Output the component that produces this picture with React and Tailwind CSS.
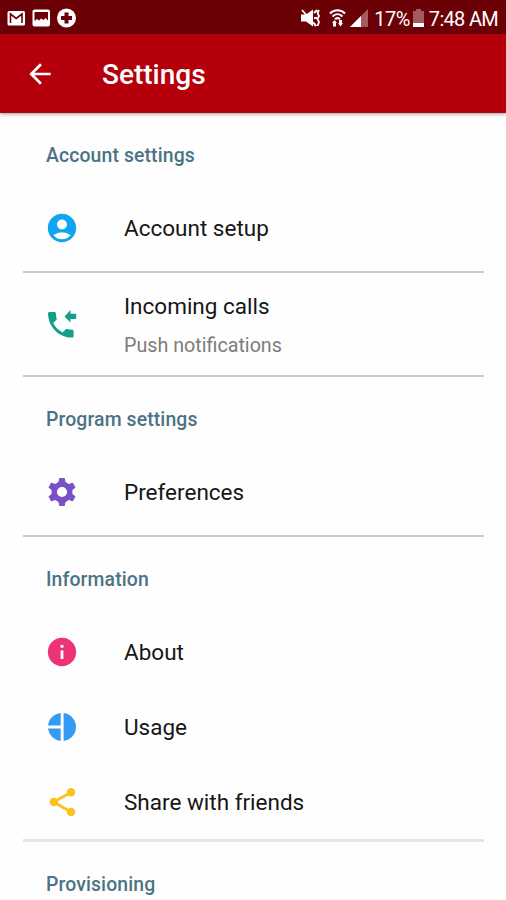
import { MdAccountCircle, MdArrowBack, MdInfo } from "react-icons/md";

function CallReceivedIcon({ className }) {
  return (
    <svg className={className} viewBox="0 0 34 34" fill="currentColor">
      <path
        transform="translate(-1.2 0.8) scale(1.42)"
        d="M20 15.5c-1.25 0-2.45-.2-3.57-.57-.35-.11-.74-.03-1.02.24l-2.2 2.2c-2.83-1.44-5.15-3.75-6.59-6.59l2.2-2.21c.28-.26.36-.65.25-1C8.7 6.45 8.5 5.25 8.5 4c0-.55-.45-1-1-1H4c-.55 0-1 .45-1 1 0 9.39 7.61 17 17 17 .55 0 1-.45 1-1v-3.5c0-.55-.45-1-1-1z"
      />
      <path d="M19.5 9.5l6-6.5v3.7h5.7v5.2h-5.7v3.7z" />
    </svg>
  );
}

function GearIcon({ className }) {
  return (
    <svg className={className} viewBox="0 0 34 34" fill="none" stroke="currentColor">
      <circle cx="17" cy="17" r="7.8" strokeWidth="5.4" />
      {[0, 60, 120, 180, 240, 300].map((angle) => (
        <path
          key={angle}
          transform={`rotate(${angle} 17 17)`}
          d="M14.600 3.500h4.800l.9 5h-6.600z"
          fill="currentColor"
          strokeWidth="1"
          strokeLinejoin="round"
        />
      ))}
    </svg>
  );
}

function UsageIcon({ className }) {
  return (
    <svg className={className} viewBox="0 0 34 34" fill="currentColor">
      <path d="M15.7 3v12.6H3A14.2 14.2 0 0 1 15.7 3z" />
      <path d="M15.7 31V18.6H3A14.2 14.2 0 0 0 15.7 31z" />
      <path d="M18.6 3a14.1 14.1 0 0 1 0 28z" />
    </svg>
  );
}

function ShareIcon({ className }) {
  return (
    <svg className={className} viewBox="0 0 34 34" fill="currentColor">
      <path d="M26 7.5L8.5 17 26 27" fill="none" stroke="currentColor" strokeWidth="2.8" />
      <circle cx="26" cy="7.3" r="4.2" />
      <circle cx="8.8" cy="17" r="4.2" />
      <circle cx="26" cy="27" r="4.2" />
    </svg>
  );
}

function NotificationIcons() {
  return (
    <svg className="h-[34px] w-[78px]" viewBox="0 0 78 34" fill="none">
      <rect x="7.5" y="11" width="17.5" height="14.5" rx="1.5" fill="#fff" />
      <path d="M10.500 23v-9l5.700 4.500L22 14v9" stroke="#6b0007" strokeWidth="1.6" />
      <rect x="32.5" y="9.5" width="17.5" height="17" rx="2" fill="#fff" />
      <path d="M34.5 12h13.500v8.500l-2.500-2.500-2 2-2.500-1.500-2 2-2-1.500-2.500 2z" fill="#6b0007" />
      <circle cx="66.5" cy="18" r="9.5" fill="#fff" />
      <path d="M66.5 12.5v11M61 18h11" stroke="#6b0007" strokeWidth="4" />
    </svg>
  );
}

function SignalIcons() {
  return (
    <svg className="h-[34px] w-[70px]" viewBox="300 0 70 34" fill="none">
      <path d="M301 14.500h5l7-5v17l-7-5h-5z" fill="#fff" />
      <path d="M302 10l14 16" stroke="#fff" strokeWidth="1.8" />
      <path
        d="M314 13l3-3M314 18h3M314 23l2 3M319 10l-1.500 3 1.500 3-1.500 3 1.500 3-1.500 4"
        stroke="#fff"
        strokeWidth="1.8"
      />
      <path
        d="M330 13.5c4-4.5 11-4.5 15 0M332.5 16.5c3-3 7-3 10 0M335 19.2c1.5-1.3 3.5-1.3 5 0"
        stroke="#fff"
        strokeWidth="2"
      />
      <path d="M332 23l2.5-3 2.5 3h-1v3.500h-3v-3.500z" fill="#fff" />
      <path d="M338 23l2.500 3.500 2.500-3.500h-1v-3h-3v3z" fill="#fff" />
      <path d="M368 9v18h-18z" fill="#a65a60" />
      <path d="M361 16v11h-11z" fill="#fff" />
    </svg>
  );
}

function BatteryIcon() {
  return (
    <svg className="ml-0.5 h-[34px] w-[13px]" viewBox="0 0 13 34">
      <path d="M4 9h5v2h3v16H1V11h3z" fill="#a65a60" />
      <path d="M1 23h11v4H1z" fill="#fff" />
    </svg>
  );
}

const sections = [
  {
    title: "Account settings",
    items: [
      { label: "Account setup", icon: MdAccountCircle, color: "text-[#0fa5f0]" },
    ],
  },
  {
    items: [
      {
        label: "Incoming calls",
        hint: "Push notifications",
        icon: CallReceivedIcon,
        color: "text-[#12a08b]",
      },
    ],
  },
  {
    title: "Program settings",
    items: [{ label: "Preferences", icon: GearIcon, color: "text-[#7951c4]" }],
  },
  {
    title: "Information",
    items: [
      { label: "About", icon: MdInfo, color: "text-[#ec3377]" },
      { label: "Usage", icon: UsageIcon, color: "text-[#339cf2]" },
      { label: "Share with friends", icon: ShareIcon, color: "text-[#fdc01c]" },
    ],
  },
  { title: "Provisioning", items: [] },
];

const dividers = [
  "mt-1.5 h-0.5 bg-[#c9c9c9]",
  "h-0.5 bg-[#c9c9c9]",
  "mt-1.5 h-0.5 bg-[#c9c9c9]",
  "h-[3px] bg-[#e5e5e5]",
];

function Item({ item }) {
  const Icon = item.icon;
  return (
    <li className={`flex items-center pl-[45px] ${item.hint ? "h-[102px]" : "h-[75px]"}`}>
      <Icon className={`size-[34px] shrink-0 ${item.color}`} />
      <div className="ml-[45px]">
        <p className="pt-px text-[22.5px] leading-7 text-[#161616]">{item.label}</p>
        {item.hint && (
          <p className="mt-3.5 text-[19.7px] leading-6 text-[#7c7c7c]">{item.hint}</p>
        )}
      </div>
    </li>
  );
}

export default function App() {
  return (
    <div className="h-[900px] w-full overflow-hidden bg-[#fefefe] font-[Roboto,sans-serif]">
      <div className="flex h-[34px] items-center justify-between bg-[#6b0007] pr-2 text-white">
        <NotificationIcons />
        <div className="flex items-center text-[20px] leading-none">
          <SignalIcons />
          <span className="ml-1 pt-1 tracking-[-0.5px]">17%</span>
          <BatteryIcon />
          <span className="ml-1 pt-1 tracking-[-0.7px]">7:48 AM</span>
        </div>
      </div>
      <header className="relative flex h-[79px] items-center bg-[#b5000b] pl-6 text-white shadow-[0_1px_4px_rgba(0,0,0,0.4)]">
        <MdArrowBack className="size-8" />
        <h1 className="ml-[46px] pt-0.5 text-[28px] font-medium leading-8">Settings</h1>
      </header>
      <main>
        {sections.map((section, i) => (
          <section key={i}>
            {section.title && (
              <h2 className="h-[77px] pl-[46px] pt-8 text-[19.4px] font-medium leading-[22px] tracking-[0.12px] text-[#4b7385]">
                {section.title}
              </h2>
            )}
            <ul>
              {section.items.map((item) => (
                <Item key={item.label} item={item} />
              ))}
            </ul>
            {dividers[i] && <div className={`ml-[23px] mr-[22px] ${dividers[i]}`} />}
          </section>
        ))}
      </main>
    </div>
  );
}
